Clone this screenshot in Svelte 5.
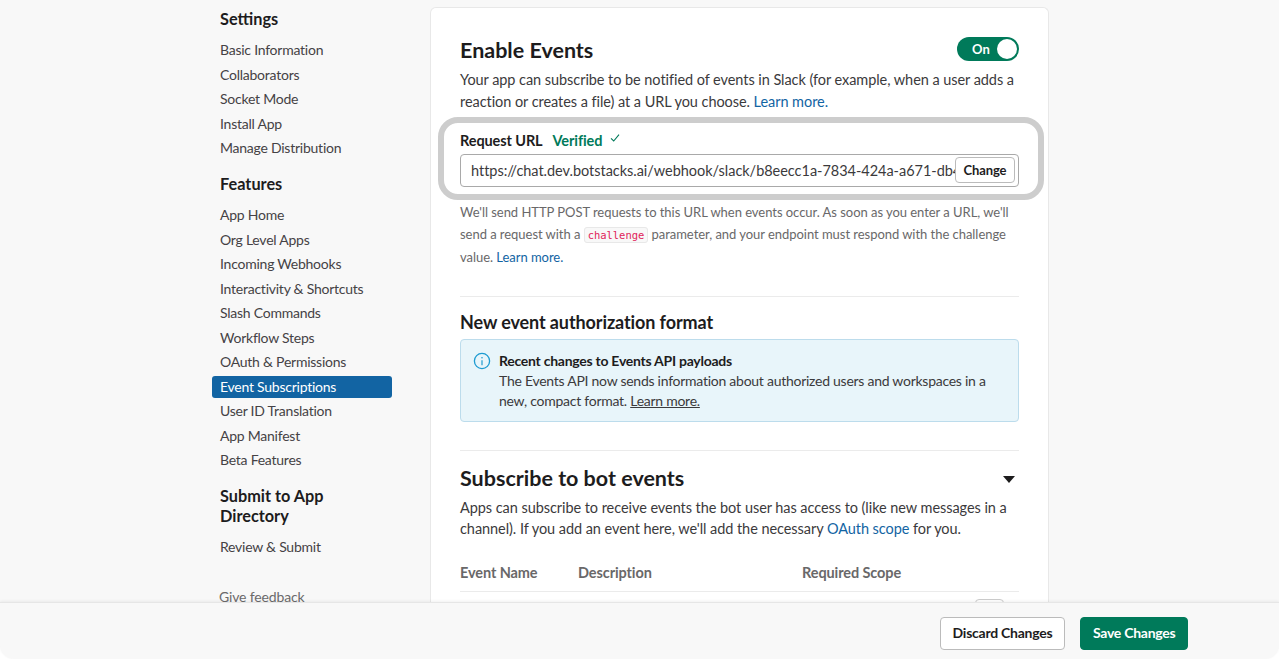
<script lang="ts">
    const settings = ["Basic Information", "Collaborators", "Socket Mode", "Install App", "Manage Distribution"];
    const features = [
        "App Home",
        "Org Level Apps",
        "Incoming Webhooks",
        "Interactivity & Shortcuts",
        "Slash Commands",
        "Workflow Steps",
        "OAuth & Permissions",
        "Event Subscriptions",
        "User ID Translation",
        "App Manifest",
        "Beta Features",
    ];
    const active = "Event Subscriptions";
    const url = "https://chat.dev.botstacks.ai/webhook/slack/b8eecc1a-7834-424a-a671-db4e0c1f7d22";
</script>

{#snippet navList(items: string[])}
    <ul class="nav-list">
        {#each items as item}
            <li class="nav-item" class:active={item === active}>{item}</li>
        {/each}
    </ul>
{/snippet}

<div class="page">
    <div class="main">
        <nav class="sidebar">
            <h3 class="nav-title">Settings</h3>
            {@render navList(settings)}
            <h3 class="nav-title">Features</h3>
            {@render navList(features)}
            <h3 class="nav-title">Submit to App Directory</h3>
            {@render navList(["Review & Submit"])}
            <div class="feedback">Give feedback</div>
        </nav>

        <main class="card">
            <div class="title-row">
                <h2 class="h-large">Enable Events</h2>
                <div class="toggle">
                    <span>On</span>
                    <i class="knob"></i>
                </div>
            </div>
            <p class="body-text">
                Your app can subscribe to be notified of events in Slack (for example, when a user adds a
                reaction or creates a file) at a URL you choose. <a href="#top">Learn more.</a>
            </p>

            <div class="highlight">
                <div class="url-label">
                    <strong>Request URL</strong>
                    <span class="verified">Verified</span>
                    <svg class="check" viewBox="0 0 10 10" width="10" height="10">
                        <path d="M1 5.4 3.7 8 9 1.6" fill="none" stroke="#007a5a" stroke-width="1.1" />
                    </svg>
                </div>
                <div class="url-field">
                    <span class="url-text">{url}</span>
                    <button class="change">Change</button>
                </div>
            </div>

            <p class="hint">
                We'll send HTTP POST requests to this URL when events occur. As soon as you enter a URL, we'll
                send a request with a <code>challenge</code> parameter, and your endpoint must respond with the challenge
                value. <a href="#top">Learn more.</a>
            </p>

            <hr class="first-rule" />

            <h3 class="h-small">New event authorization format</h3>
            <div class="notice">
                <svg class="info" viewBox="0 0 18 18" width="18" height="18">
                    <circle cx="9" cy="9" r="7.6" fill="none" stroke="#1d9bd1" stroke-width="1.3" />
                    <circle cx="9" cy="5.7" r="0.8" fill="#1d9bd1" />
                    <path d="M9 8.2v5" stroke="#1d9bd1" stroke-width="1.2" />
                </svg>
                <div>
                    <strong>Recent changes to Events API payloads</strong><br />
                    The Events API now sends information about authorized users and workspaces in a
                    new, compact format. <u>Learn more.</u>
                </div>
            </div>

            <hr class="second-rule" />

            <div class="title-row sub-title">
                <h2 class="h-large">Subscribe to bot events</h2>
                <i class="caret"></i>
            </div>
            <p class="body-text">
                Apps can subscribe to receive events the bot user has access to (like new messages in a
                channel). If you add an event here, we'll add the necessary <a href="#top">OAuth scope</a> for you.
            </p>

            <div class="table-head">
                <span>Event Name</span>
                <span>Description</span>
                <span>Required Scope</span>
            </div>
            <div class="table-row">
                <i class="row-btn"></i>
            </div>
        </main>
    </div>

    <footer class="footer">
        <button class="btn">Discard Changes</button>
        <button class="btn primary">Save Changes</button>
    </footer>
</div>

<style>
    :global(body) {
        margin: 0;
        font-family: Lato, "Open Sans", sans-serif;
        color: #1d1c1d;
    }

    .page {
        display: flex;
        flex-direction: column;
        height: 100vh;
        overflow: hidden;
        background: #fff;
    }

    .main {
        flex: 1;
        min-height: 0;
        overflow: hidden;
        display: flex;
        align-items: flex-start;
        gap: 38px;
        padding-left: 212px;
        background: #f8f8f8;
    }

    .sidebar {
        width: 180px;
        flex: none;
        padding-top: 9px;
    }

    .nav-title {
        margin: 0 8px 10px;
        font-size: 16.3px;
        line-height: 20px;
        font-weight: 700;
    }

    .nav-list {
        list-style: none;
        margin: 0 0 15px;
        padding: 0;
    }

    .nav-item {
        height: 22px;
        margin-bottom: 2.5px;
        padding: 0 8px;
        border-radius: 3px;
        font-size: 14px;
        line-height: 22px;
        letter-spacing: -0.24px;
        color: #454245;
    }

    .nav-item.active {
        background: #1264a3;
        color: #fff;
    }

    .feedback {
        margin: 29px 7px 0;
        font-size: 14px;
        line-height: 20px;
        letter-spacing: -0.15px;
        color: #6b6a6b;
    }

    .card {
        width: 559px;
        flex: none;
        margin-top: 7px;
        padding: 28px 29px 0;
        background: #fff;
        border: 1px solid #e8e8e8;
        border-bottom: none;
        border-radius: 6px 6px 0 0;
    }

    .title-row {
        display: flex;
        align-items: center;
        justify-content: space-between;
        height: 28px;
    }

    .h-large {
        margin: 0;
        font-size: 21.5px;
        line-height: 28px;
        font-weight: 700;
        color: #1d1c1d;
    }

    .toggle {
        display: flex;
        align-items: center;
        justify-content: space-between;
        box-sizing: border-box;
        width: 62px;
        height: 24px;
        margin-top: -2px;
        padding: 0 2px 0 15px;
        border-radius: 12px;
        background: #007a5a;
        color: #fff;
        font-size: 13px;
        font-weight: 700;
    }

    .knob {
        width: 20px;
        height: 20px;
        border-radius: 50%;
        background: #fff;
    }

    .body-text {
        margin: 5px 0 0;
        font-size: 14.5px;
        line-height: 21.5px;
        letter-spacing: -0.06px;
        color: #3b3a3c;
    }

    a {
        color: #1264a3;
        text-decoration: none;
    }

    .highlight {
        box-sizing: border-box;
        height: 83px;
        margin: 5px -25px 0 -22px;
        padding: 7px 19px 0 16px;
        border: 6px solid #cdcdcd;
        border-radius: 20px;
    }

    .url-label {
        display: flex;
        align-items: center;
        height: 20px;
        font-size: 14.5px;
    }

    .url-label strong {
        font-weight: 700;
        letter-spacing: -0.1px;
        color: #1d1c1d;
    }

    .verified {
        margin-left: 10px;
        color: #007a5a;
        font-weight: 700;
        letter-spacing: -0.1px;
    }

    .check {
        margin: -4px 0 0 8px;
    }

    .url-field {
        position: relative;
        display: flex;
        align-items: center;
        box-sizing: border-box;
        height: 33px;
        margin-top: 4px;
        padding-left: 10px;
        border: 1px solid #a9a9a9;
        border-radius: 4px;
        font-size: 14.5px;
        letter-spacing: -0.03px;
        color: #3b3a3c;
    }

    .url-text {
        width: 484px;
        overflow: hidden;
        white-space: nowrap;
    }

    .change {
        position: absolute;
        right: 3px;
        top: 2px;
        width: 60px;
        height: 26px;
        padding: 0;
        border: 1px solid #bbb;
        border-radius: 4px;
        background: #fff;
        font: 700 13px Lato, sans-serif;
        letter-spacing: -0.1px;
        color: #1d1c1d;
    }

    .hint {
        margin: 1px 0 0;
        font-size: 13px;
        line-height: 22.3px;
        letter-spacing: -0.04px;
        color: #696869;
    }

    code {
        padding: 1px 3px;
        border: 1px solid #e8e8e8;
        border-radius: 3px;
        background: #f8f8f8;
        font-family: "DejaVu Sans Mono", "Liberation Mono", monospace;
        font-size: 10.5px;
        line-height: 1;
        color: #e01e5a;
    }

    hr {
        margin: 0;
        border: none;
        border-top: 1px solid #ebebeb;
    }

    .first-rule {
        margin-top: 28px;
    }

    .second-rule {
        margin-top: 28px;
    }

    .h-small {
        margin: 14px 0 6px;
        font-size: 18px;
        line-height: 22px;
        font-weight: 700;
        letter-spacing: -0.1px;
        color: #1d1c1d;
    }

    .notice {
        display: flex;
        gap: 8px;
        box-sizing: border-box;
        height: 83px;
        padding: 11px 12px;
        border: 1px solid #bcdcec;
        border-radius: 4px;
        background: #e8f5fa;
        font-size: 14px;
        line-height: 20px;
        letter-spacing: -0.26px;
        color: #3b3a3c;
    }

    .notice strong {
        font-weight: 700;
        color: #1d1c1d;
    }

    .info {
        flex: none;
        margin-top: 1px;
    }

    .sub-title {
        margin-top: 13px;
    }

    .caret {
        width: 0;
        height: 0;
        margin: 4px 4px 0 0;
        border-style: solid;
        border-width: 7px 6px 0;
        border-color: #1d1c1d transparent transparent;
    }

    .table-head {
        display: flex;
        height: 36px;
        align-items: center;
        margin-top: 15px;
        border-bottom: 1px solid #ebebeb;
        font-size: 14.5px;
        font-weight: 700;
        letter-spacing: -0.1px;
        color: #696869;
    }

    .table-head span:nth-child(1) {
        width: 118px;
    }

    .table-head span:nth-child(2) {
        width: 224px;
    }

    .table-row {
        display: flex;
        justify-content: flex-end;
        padding: 7px 15px 0 0;
        height: 40px;
    }

    .row-btn {
        width: 27px;
        height: 27px;
        border: 1px solid #ccc;
        border-radius: 4px;
    }

    .footer {
        position: relative;
        flex: none;
        display: flex;
        justify-content: flex-end;
        align-items: flex-start;
        gap: 15px;
        box-sizing: border-box;
        height: 57px;
        padding: 14px 91px 0 0;
        background: #f8f8f8;
        border-top: 1px solid #e6e6e6;
        border-radius: 0 0 14px 14px;
        box-shadow: 0 -1px 3px rgba(0, 0, 0, 0.06);
    }

    .btn {
        box-sizing: border-box;
        height: 33px;
        padding: 0 12px 2px;
        border: 1px solid #bbb;
        border-radius: 4px;
        background: #fff;
        font: 700 14px Lato, sans-serif;
        letter-spacing: -0.25px;
        color: #1d1c1d;
    }

    .btn.primary {
        padding: 0 11.5px 2px;
        border-color: #007a5a;
        background: #007a5a;
        color: #fff;
    }
</style>
